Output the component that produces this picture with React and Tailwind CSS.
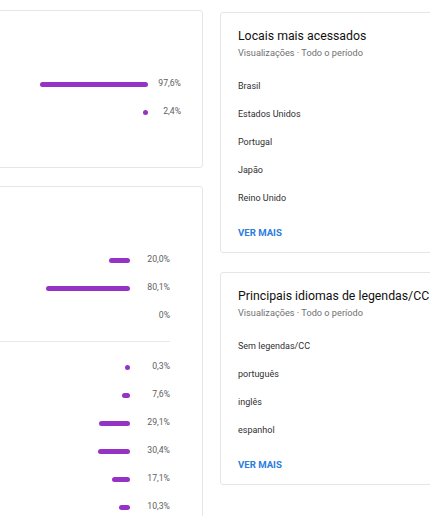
import React from "react";

const font = { fontFamily: "Roboto, 'Liberation Sans', sans-serif" };

function Bar({ pct, scale }) {
  const w = Math.max(5, pct * scale);
  return <div className="h-[5px] rounded-full bg-[#9633c7]" style={{ width: `${w}px` }} />;
}

function BarRow({ pct, label, scale, textW }) {
  return (
    <div className="flex h-[28px] items-center justify-end">
      <Bar pct={pct} scale={scale} />
      <div className={`${textW} text-right text-[8.7px] text-[#606060]`}>{label}</div>
    </div>
  );
}

function ListCard({ title, items }) {
  return (
    <div className="rounded-[3px] border border-[#e6e6e6] bg-white pb-[11px] pl-[17px] pt-[13px]">
      <div className="whitespace-nowrap text-[12.3px] leading-[20px] text-[#0f0f0f]">{title}</div>
      <div className="mt-[1px] whitespace-nowrap text-[9.2px] leading-[12px] text-[#717171]">Visualizações · Todo o período</div>
      <div className="mt-[14px] flex flex-col">
        {items.map((it) => (
          <div key={it} className="flex h-[28px] items-center text-[9px] text-[#303030]">{it}</div>
        ))}
      </div>
      <div className="mt-[12px] text-[9.6px] font-bold leading-[16px] text-[#2b7de0]">VER MAIS</div>
    </div>
  );
}

export default function App() {
  const s2a = [
    ["20,0%", 20.0],
    ["80,1%", 80.1],
    ["0%", 0],
  ];
  const s2b = [
    ["0,3%", 0.3],
    ["7,6%", 7.6],
    ["29,1%", 29.1],
    ["30,4%", 30.4],
    ["17,1%", 17.1],
    ["10,3%", 10.3],
  ];
  return (
    <div className="relative h-[516px] w-[430px] overflow-hidden bg-white" style={font}>
      <div className="flex items-start gap-[17px]">
        <div className="-ml-[20px] flex w-[223px] shrink-0 flex-col gap-[18px] pt-[10px]">
          <div className="h-[158px] rounded-[3px] border border-[#e6e6e6] bg-white pr-[21px] pt-[59px]">
            <BarRow pct={97.6} label="97,6%" scale={1.107} textW="w-[33px]" />
            <BarRow pct={2.4} label="2,4%" scale={1.107} textW="w-[33px]" />
          </div>
          <div className="h-[400px] rounded-[3px] border border-[#e6e6e6] bg-white pr-[32px] pt-[59px]">
            {s2a.map(([l, p]) =>
              p === 0 ? (
                <div key={l} className="flex h-[28px] items-center justify-end text-[8.7px] text-[#606060]">{l}</div>
              ) : (
                <BarRow key={l} pct={p} label={l} scale={1.05} textW="w-[40px]" />
              )
            )}
            <div className="mt-[11px] border-t border-[#e8e8e8] pt-[11px]">
              {s2b.map(([l, p]) => (
                <BarRow key={l} pct={p} label={l} scale={1.05} textW="w-[40px]" />
              ))}
            </div>
          </div>
        </div>
        <div className="flex w-[260px] shrink-0 flex-col gap-[19px] pt-[12px]">
          <ListCard title="Locais mais acessados" items={["Brasil", "Estados Unidos", "Portugal", "Japão", "Reino Unido"]} />
          <ListCard title="Principais idiomas de legendas/CC" items={["Sem legendas/CC", "português", "inglês", "espanhol"]} />
        </div>
      </div>
    </div>
  );
}
